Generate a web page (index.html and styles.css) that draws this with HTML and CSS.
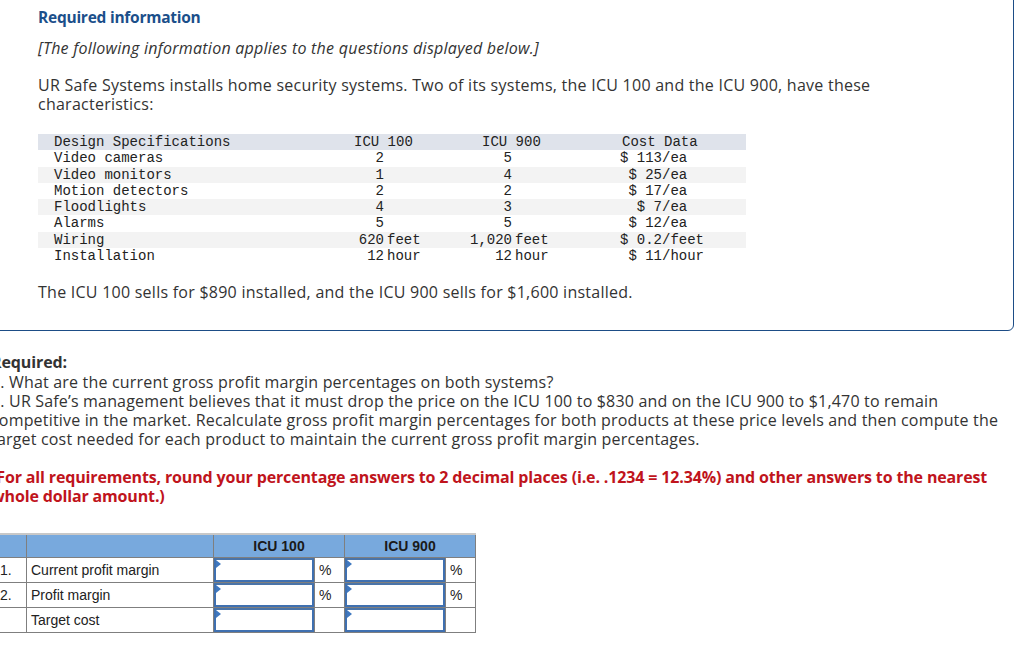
FILE: index.html
```html
<!DOCTYPE html>
<html>
<head>
<meta charset="utf-8">
<link rel="stylesheet" href="styles.css">
</head>
<body>
<div class="page">
  <section class="info-panel">
    <h2 class="info-title">Required information</h2>
    <p class="info-note">[The following information applies to the questions displayed below.]</p>
    <p class="info-text">UR Safe Systems installs home security systems. Two of its systems, the ICU 100 and the ICU 900, have these characteristics:</p>
    <div class="spec-table">
      <div class="spec-row spec-head">
        <span class="c-label">Design Specifications</span>
        <span class="h-icu1">ICU 100</span>
        <span class="h-icu9">ICU 900</span>
        <span class="h-cost">Cost Data</span>
      </div>
      <div class="spec-row">
        <span class="c-label">Video cameras</span>
        <span class="c-q1">2</span><span class="c-u1"></span>
        <span class="c-q2">5</span><span class="c-u2"></span>
        <span class="c-cn">$ 113</span><span class="c-cu">/ea</span>
      </div>
      <div class="spec-row stripe">
        <span class="c-label">Video monitors</span>
        <span class="c-q1">1</span><span class="c-u1"></span>
        <span class="c-q2">4</span><span class="c-u2"></span>
        <span class="c-cn">$ 25</span><span class="c-cu">/ea</span>
      </div>
      <div class="spec-row">
        <span class="c-label">Motion detectors</span>
        <span class="c-q1">2</span><span class="c-u1"></span>
        <span class="c-q2">2</span><span class="c-u2"></span>
        <span class="c-cn">$ 17</span><span class="c-cu">/ea</span>
      </div>
      <div class="spec-row stripe">
        <span class="c-label">Floodlights</span>
        <span class="c-q1">4</span><span class="c-u1"></span>
        <span class="c-q2">3</span><span class="c-u2"></span>
        <span class="c-cn">$ 7</span><span class="c-cu">/ea</span>
      </div>
      <div class="spec-row">
        <span class="c-label">Alarms</span>
        <span class="c-q1">5</span><span class="c-u1"></span>
        <span class="c-q2">5</span><span class="c-u2"></span>
        <span class="c-cn">$ 12</span><span class="c-cu">/ea</span>
      </div>
      <div class="spec-row stripe">
        <span class="c-label">Wiring</span>
        <span class="c-q1">620</span><span class="c-u1">feet</span>
        <span class="c-q2">1,020</span><span class="c-u2">feet</span>
        <span class="c-cn">$ 0.2</span><span class="c-cu">/feet</span>
      </div>
      <div class="spec-row">
        <span class="c-label">Installation</span>
        <span class="c-q1">12</span><span class="c-u1">hour</span>
        <span class="c-q2">12</span><span class="c-u2">hour</span>
        <span class="c-cn">$ 11</span><span class="c-cu">/hour</span>
      </div>
    </div>
    <p class="info-text sells">The ICU 100 sells for $890 installed, and the ICU 900 sells for $1,600 installed.</p>
  </section>

  <section class="question">
    <p class="req-title">Required:</p>
    <p class="req-text">1. What are the current gross profit margin percentages on both systems?<br>2. UR Safe’s management believes that it must drop the price on the ICU 100 to $830 and on the ICU 900 to $1,470 to remain competitive in the market. Recalculate gross profit margin percentages for both products at these price levels and then compute the target cost needed for each product to maintain the current gross profit margin percentages.</p>
    <p class="req-warn">(For all requirements, round your percentage answers to 2 decimal places (i.e. .1234 = 12.34%) and other answers to the nearest whole dollar amount.)</p>

    <table class="answer">
      <thead>
        <tr>
          <th class="a-num"></th>
          <th class="a-label"></th>
          <th colspan="2">ICU 100</th>
          <th colspan="2">ICU 900</th>
        </tr>
      </thead>
      <tbody>
        <tr>
          <td class="a-num">1.</td>
          <td class="a-label">Current profit margin</td>
          <td class="a-input"><span class="field"></span></td>
          <td class="a-unit">%</td>
          <td class="a-input"><span class="field"></span></td>
          <td class="a-unit">%</td>
        </tr>
        <tr>
          <td class="a-num">2.</td>
          <td class="a-label">Profit margin</td>
          <td class="a-input"><span class="field"></span></td>
          <td class="a-unit">%</td>
          <td class="a-input"><span class="field"></span></td>
          <td class="a-unit">%</td>
        </tr>
        <tr>
          <td class="a-num"></td>
          <td class="a-label">Target cost</td>
          <td class="a-input"><span class="field"></span></td>
          <td class="a-unit"></td>
          <td class="a-input"><span class="field"></span></td>
          <td class="a-unit"></td>
        </tr>
      </tbody>
    </table>
  </section>
</div>
</body>
</html>
```
FILE: styles.css
```css
html, body {
  margin: 0;
  padding: 0;
  background: #fff;
  overflow: hidden;
}
body {
  width: 1024px;
  height: 653px;
  font-family: "Open Sans", "Lato", sans-serif;
  color: #333;
}
.page {
  margin-left: -10px;
  width: 1024px;
}
.info-panel {
  box-sizing: border-box;
  width: 1024px;
  margin-top: -40px;
  padding: 46px 20px 28px 47px;
  border: 1.5px solid #1d4d86;
  border-radius: 6px;
}
.info-title {
  margin: 0;
  font-size: 15.5px;
  line-height: 20px;
  font-weight: 700;
  letter-spacing: -0.25px;
  color: #1b4f8a;
}
.info-note {
  margin: 11px 0 0;
  font-size: 16px;
  line-height: 20px;
  letter-spacing: 0.25px;
  font-style: italic;
}
.info-text {
  margin: 18px 0 0;
  font-size: 16px;
  line-height: 19px;
  letter-spacing: 0.25px;
  padding-right: 100px;
}
.info-text.sells {
  margin-top: 18px;
  line-height: 20px;
}
.spec-table {
  margin-top: 20px;
  width: 708px;
  font-family: "Liberation Mono", "DejaVu Sans Mono", monospace;
  font-size: 14px;
  letter-spacing: 0;
  color: #222;
}
.spec-row {
  display: grid;
  grid-template-columns: 303px 43px 77px 51px 59px 91px 84px;
  height: 16.3px;
  line-height: 16.3px;
  white-space: pre;
}
.spec-row.stripe {
  background: #f3f3f3;
}
.spec-head {
  background: #dfe3eb;
}
.c-label {
  padding-left: 16px;
}
.c-q1, .c-q2, .c-cn {
  text-align: right;
}
.c-u1, .c-u2 {
  padding-left: 3px;
}
.h-icu1 {
  grid-column: 2 / span 2;
  padding-left: 13px;
}
.h-icu9 {
  grid-column: 4 / span 2;
  padding-left: 21px;
}
.h-cost {
  grid-column: 6 / span 2;
  padding-left: 51px;
}

.question {
  padding-left: 1px;
}
.req-title {
  margin: 22px 0 0;
  font-size: 16px;
  line-height: 19px;
  font-weight: 700;
  letter-spacing: -0.1px;
}
.req-text {
  margin: 1px 0 0;
  font-size: 16px;
  line-height: 19px;
  letter-spacing: 0.18px;
  padding-right: 0;
}
.req-warn {
  margin: 19px 0 0;
  font-size: 16px;
  line-height: 19px;
  font-weight: 700;
  letter-spacing: -0.15px;
  color: #c0141c;
  padding-right: 0;
}

.answer {
  margin: 27px 0 0 4px;
  border-collapse: collapse;
  font-family: "Liberation Sans", Arial, sans-serif;
  font-size: 14px;
  color: #222;
}
.answer th, .answer td {
  border: 1px solid #7f7f7f;
  padding: 0;
}
.answer thead tr {
  border-top: 2px solid #c8c8c8;
}
.answer th {
  background: #78a9dd;
  height: 22px;
  font-weight: 700;
  text-align: center;
  color: #1a1a1a;
}
.answer td {
  height: 24px;
}
.a-num {
  width: 26px;
  padding-left: 4px !important;
  text-align: left;
}
.a-label {
  width: 182px;
  padding-left: 4px !important;
  text-align: left;
}
.a-input {
  width: 100px;
  position: relative;
}
.field {
  position: absolute;
  inset: 0;
  border: 2px solid #3f70b0;
  border-top-color: #4a74a8;
  background: #fff;
}
.field::before {
  content: "";
  position: absolute;
  left: 0;
  top: 0;
  border-left: 5px solid #3f78c0;
  border-top: 4px solid transparent;
  border-bottom: 4px solid transparent;
}
.a-unit {
  width: 25px;
  padding-left: 4px !important;
  text-align: left;
}
```
